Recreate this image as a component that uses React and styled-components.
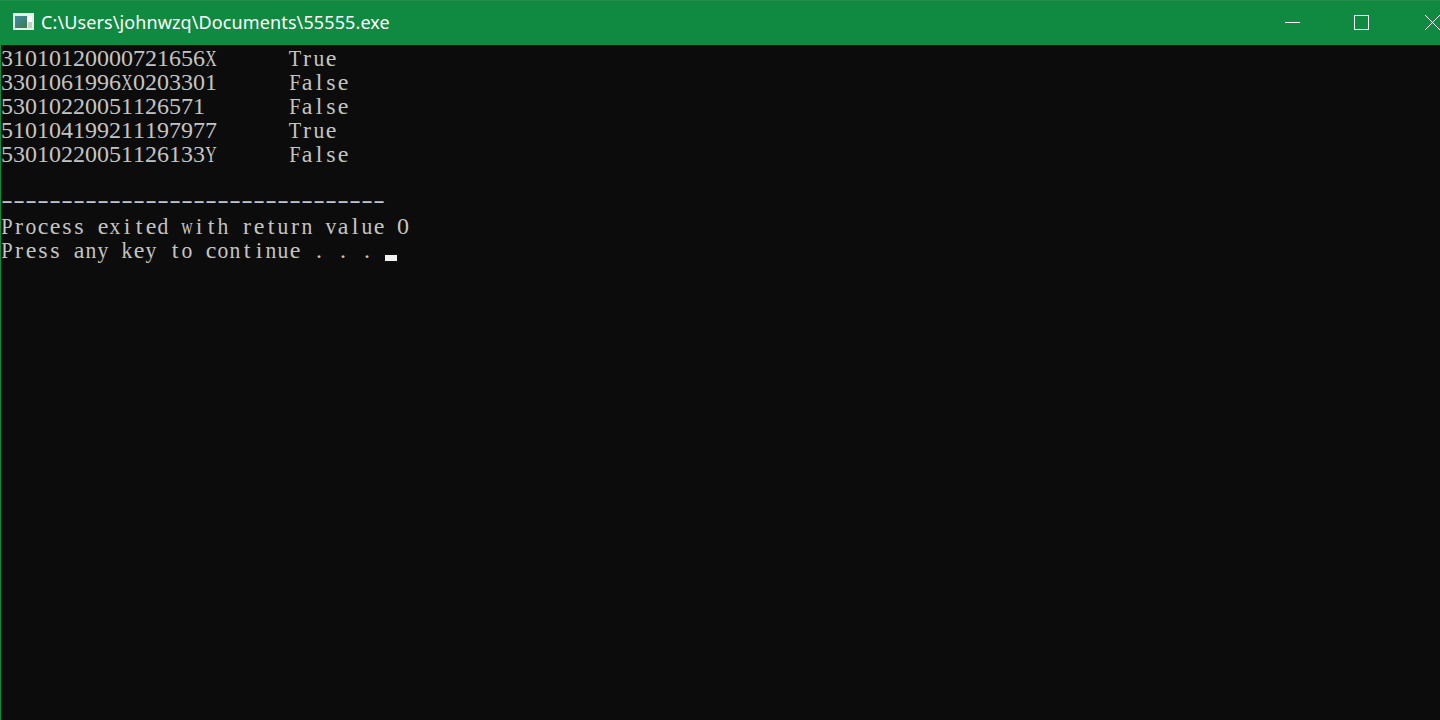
import styled, { createGlobalStyle } from 'styled-components';

const GlobalStyle = createGlobalStyle`
  html, body {
    margin: 0;
    padding: 0;
    background: #0c0c0c;
    overflow: hidden;
  }
`;

const Window = styled.div`
  width: 1440px;
  height: 720px;
  display: flex;
  flex-direction: column;
  overflow: hidden;
  background: #0c0c0c;
  box-shadow: inset 1px 0 0 #118a41;
`;

const TitleBar = styled.header`
  height: 45px;
  flex: none;
  display: flex;
  align-items: center;
  background: #118a41;
  border-top: 1px solid #1f8f4c;
  box-sizing: border-box;
  padding-left: 13px;
`;

const AppIcon = styled.svg`
  width: 21px;
  height: 17px;
  flex: none;
  margin-top: -3px;
`;

const Title = styled.h1`
  margin: -3px 0 0 7px;
  font-family: 'Noto Sans', sans-serif;
  font-size: 18px;
  font-weight: 400;
  letter-spacing: 0.11px;
  color: #ffffff;
  white-space: nowrap;
`;

const Controls = styled.div`
  margin-left: auto;
  display: flex;
  align-items: center;
  gap: 54px;
`;

const ControlIcon = styled.svg`
  width: 15px;
  height: 15px;
  display: block;
  margin-top: -1px;
  margin-left: ${(props) => (props.$close ? '2px' : '0')};
  stroke: #ffffff;
  stroke-width: 1;
  fill: none;
`;

const Console = styled.main`
  flex: 1;
  padding: 1px 0 0 1px;
  font-family: 'Liberation Serif', serif;
  font-size: 24px;
  line-height: 24px;
  color: #c4c4c4;
`;

const Line = styled.div`
  height: 24px;
  display: flex;
  white-space: pre;
  line-height: ${(props) => (props.$rule ? '20px' : '24px')};
`;

// every character sits in its own 12px cell, as in the console's fixed grid
const Cell = styled.span`
  flex: none;
  width: 12px;
  display: flex;
  justify-content: center;
  transform: scaleX(${(props) => props.$squeeze});
`;

const Cursor = styled.span`
  flex: none;
  width: 12px;
  height: 6px;
  background: #f2f2f2;
  align-self: flex-end;
  margin-bottom: 1px;
`;

const lines = [
  '31010120000721656X      True',
  '3301061996X0203301      False',
  '53010220051126571       False',
  '510104199211197977      True',
  '53010220051126133Y      False',
  '',
  '--------------------------------',
  'Process exited with return value 0',
  'Press any key to continue . . . ',
];

// Liberation Serif is proportional: pull the wide glyphs into the 12px cell
const squeezeFor = (ch) => {
  if ('XYmw'.includes(ch)) return 0.66;
  if ('TFP'.includes(ch)) return 0.85;
  if (ch === '-') return 1.45;
  if ('nuohkyvxdp'.includes(ch)) return 0.9;
  return 1;
};

export default function App() {
  return (
    <Window>
      <GlobalStyle />
      <TitleBar>
        <AppIcon viewBox="0 0 21 17">
          <defs>
            <linearGradient id="screen" x1="0" y1="0" x2="1" y2="1">
              <stop offset="0" stopColor="#3d8fa8" />
              <stop offset="1" stopColor="#3f7a4a" />
            </linearGradient>
          </defs>
          <rect x="0" y="0" width="21" height="17" fill="#e8eeea" />
          <rect x="2" y="3" width="12" height="12" fill="url(#screen)" />
          <rect x="15" y="3" width="4" height="6" fill="#ffffff" />
          <rect x="15" y="9" width="4" height="6" fill="#bcd0c4" />
        </AppIcon>
        <Title>C:\Users\johnwzq\Documents\55555.exe</Title>
        <Controls>
          <ControlIcon viewBox="0 0 15 15">
            <path d="M0 7.5H15" />
          </ControlIcon>
          <ControlIcon viewBox="0 0 15 15">
            <rect x="0.5" y="0.5" width="14" height="14" />
          </ControlIcon>
          <ControlIcon $close viewBox="0 0 15 15">
            <path d="M0 0L15 15M15 0L0 15" />
          </ControlIcon>
        </Controls>
      </TitleBar>
      <Console>
        {lines.map((text, i) => (
          <Line key={i} $rule={text.startsWith('---')}>
            {text.split('').map((ch, j) => (
              <Cell key={j} $squeeze={squeezeFor(ch)}>{ch}</Cell>
            ))}
            {text.startsWith('Press') && <Cursor />}
          </Line>
        ))}
      </Console>
    </Window>
  );
}
